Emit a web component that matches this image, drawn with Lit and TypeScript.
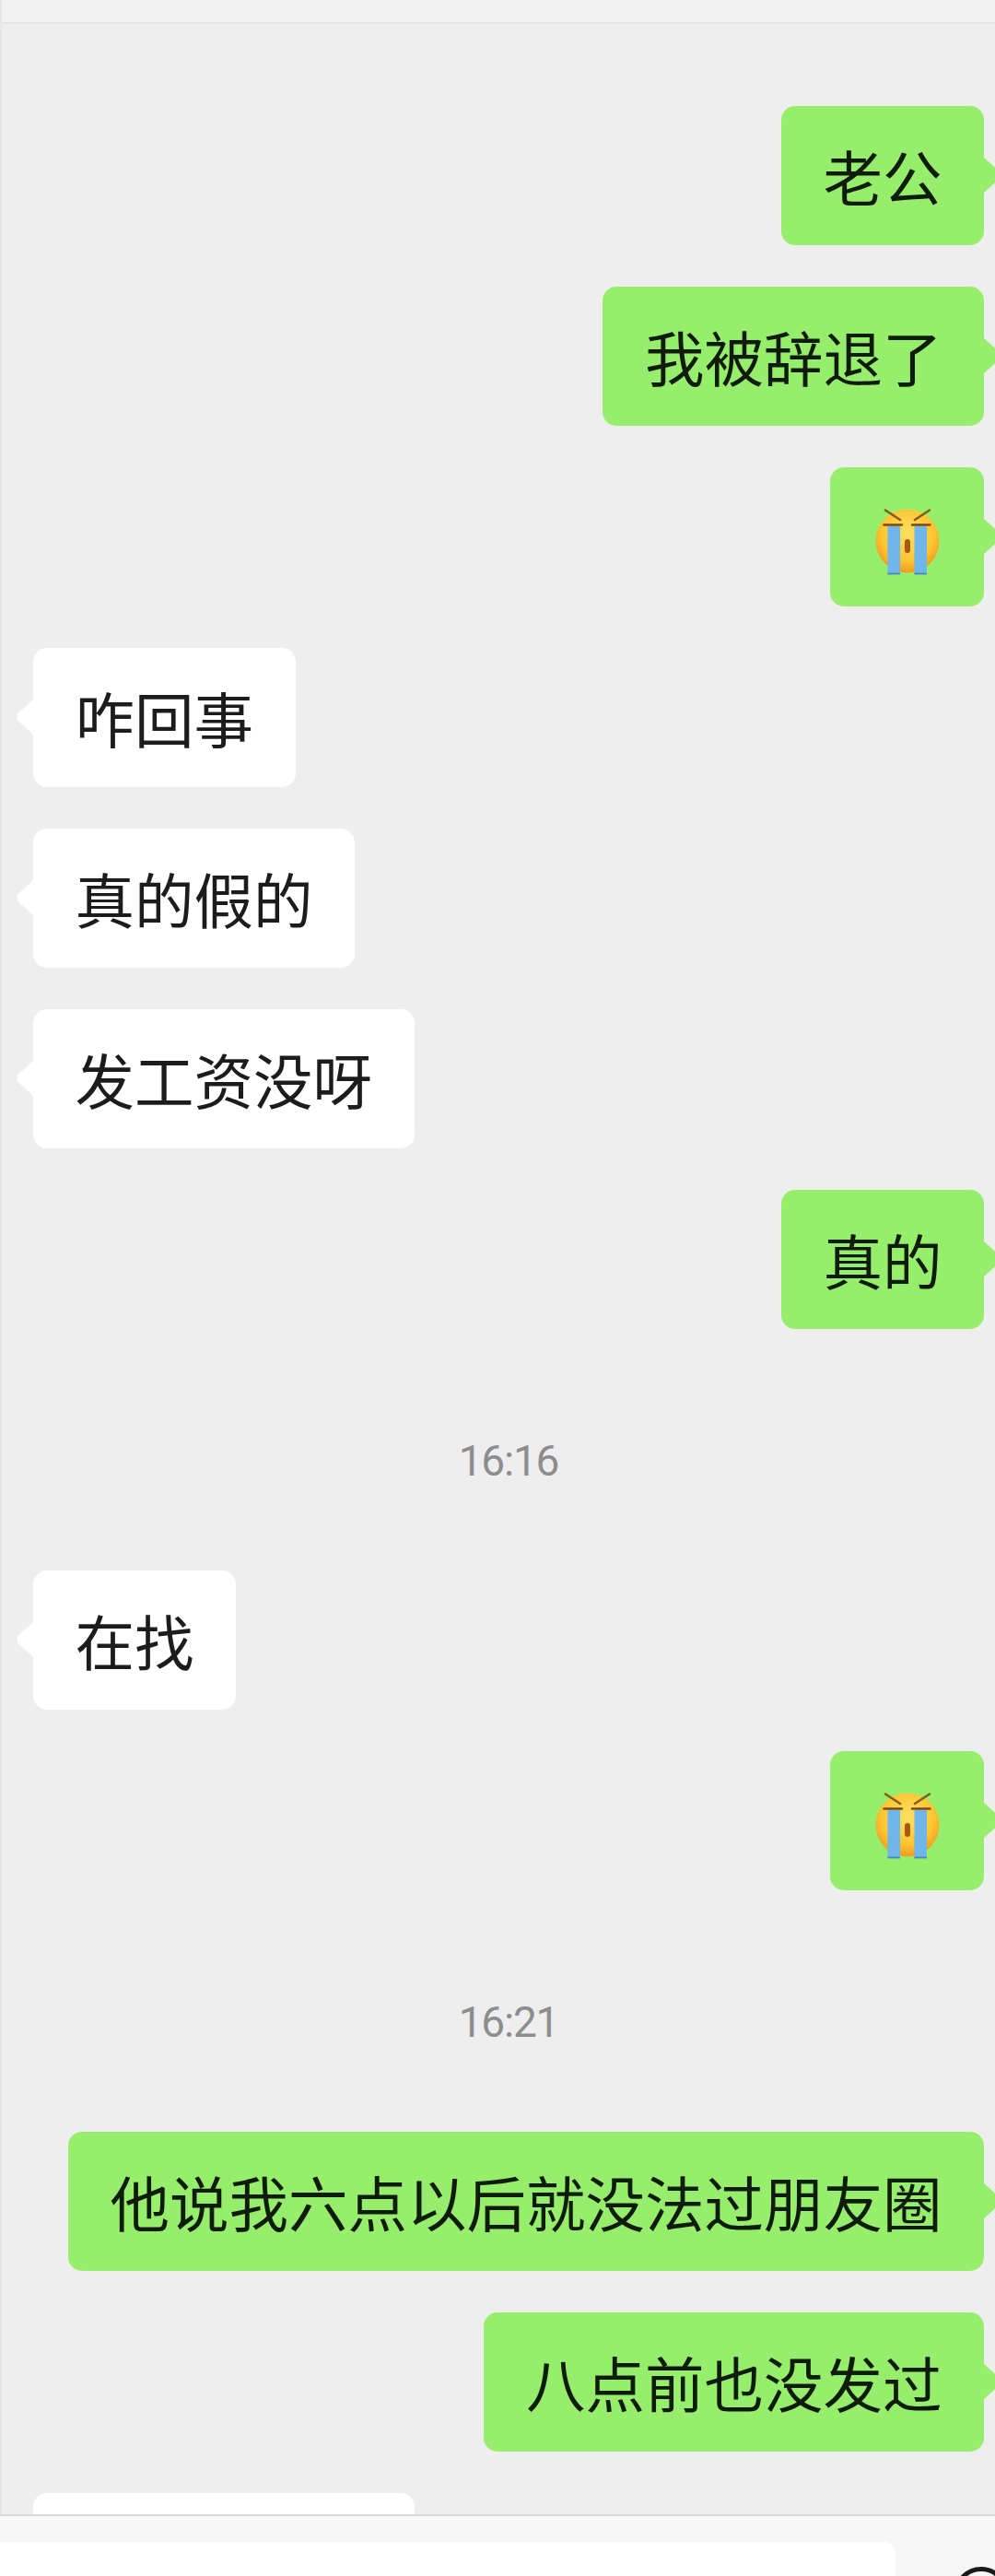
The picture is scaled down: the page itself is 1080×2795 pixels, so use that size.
import { LitElement, html, css, svg } from "lit";
import { customElement } from "lit/decorators.js";

type Item =
  | { kind: "me" | "them"; text: string }
  | { kind: "me"; emoji: true }
  | { kind: "time"; text: string };

const ITEMS: Item[] = [
  { kind: "me", text: "老公" },
  { kind: "me", text: "我被辞退了" },
  { kind: "me", emoji: true },
  { kind: "them", text: "咋回事" },
  { kind: "them", text: "真的假的" },
  { kind: "them", text: "发工资没呀" },
  { kind: "me", text: "真的" },
  { kind: "time", text: "16:16" },
  { kind: "them", text: "在找" },
  { kind: "me", emoji: true },
  { kind: "time", text: "16:21" },
  { kind: "me", text: "他说我六点以后就没法过朋友圈" },
  { kind: "me", text: "八点前也没发过" },
];

const tail = svg`<path d="M20 0 L3 15.5 Q0 20 3 24.5 L20 40 Z" fill="currentColor"/>`;

const cry = html`<svg class="emoji" viewBox="0 0 70 72" aria-hidden="true">
  <defs>
    <radialGradient id="f" cx="50%" cy="38%" r="60%">
      <stop offset="0" stop-color="#ffe064" />
      <stop offset="0.7" stop-color="#fcc531" />
      <stop offset="1" stop-color="#f0a020" />
    </radialGradient>
  </defs>
  <circle cx="35" cy="35" r="34.5" fill="url(#f)" />
  <path d="M11 1.5 L27 12 M59 1.5 L43 12" stroke="#8a5a1c" stroke-width="2.6" stroke-linecap="round" />
  <path d="M9.5 17.5 H29 M40 17.5 H59.5" stroke="#7a4a14" stroke-width="2.4" stroke-linecap="round" />
  <rect x="13.5" y="19" width="13.5" height="52" fill="#6fb6ea" />
  <rect x="42.5" y="19" width="13.5" height="52" fill="#6fb6ea" />
  <rect x="13.5" y="69.6" width="13.5" height="1.8" fill="#4a86b8" />
  <rect x="42.5" y="69.6" width="13.5" height="1.8" fill="#4a86b8" />
  <rect x="32" y="33" width="6" height="15" rx="3" fill="#a8590f" />
</svg>`;

@customElement("app-root")
export class AppRoot extends LitElement {
  static styles = css`
    :host {
      display: block;
      width: 1080px;
      height: 2795px;
      overflow: hidden;
      font-family: "Noto Sans CJK SC", "Liberation Sans", sans-serif;
      background: #eeeeee;
    }
    .page {
      height: 2795px;
      display: flex;
      flex-direction: column;
    }
    .top {
      flex: none;
      height: 24px;
      background: #f1f1f1;
      border-left: 2px solid #e6e6e6;
      border-bottom: 2px solid #e4e4e4;
    }
    .chat {
      flex: 1;
      min-height: 0;
      overflow: hidden;
      border-left: 2px solid #e6e6e6;
      padding: 89px 12px 0 34px;
      display: flex;
      flex-direction: column;
      gap: 45px;
    }
    .row {
      display: flex;
    }
    .row.me {
      justify-content: flex-end;
    }
    .bubble {
      position: relative;
      box-sizing: border-box;
      height: 151px;
      padding: 0 45.5px;
      border-radius: 15px;
      display: flex;
      align-items: center;
      font-size: 64.5px;
      line-height: 1;
      white-space: nowrap;
    }
    .me .bubble {
      background: #97ee6c;
      color: #0f1c0a;
    }
    .them .bubble {
      background: #ffffff;
      color: #1c1c1c;
    }
    .bubble.emoji-bubble {
      width: 167px;
      padding: 0;
      justify-content: center;
    }
    .bubble.cut {
      width: 414px;
    }
    .emoji {
      width: 70px;
      height: 72px;
      margin: 11px 0 0 1px;
    }
    .tail {
      position: absolute;
      top: 55px;
      width: 20px;
      height: 40px;
    }
    .me .tail {
      right: -19px;
      color: #97ee6c;
      transform: scaleX(-1);
    }
    .them .tail {
      left: -19px;
      color: #ffffff;
    }
    .time {
      align-self: center;
      margin: 68px 0 44px;
      font-size: 46px;
      line-height: 60px;
      color: #8d8d8d;
      font-family: Roboto, "Liberation Sans", sans-serif;
      letter-spacing: -1.2px;
    }
    .bottom {
      flex: none;
      height: 67px;
      box-sizing: border-box;
      background: #f7f7f7;
      border-top: 2px solid #d9d9d9;
      padding-top: 28px;
      display: flex;
      align-items: flex-start;
      position: relative;
    }
    .input {
      width: 972px;
      height: 60px;
      background: #ffffff;
      border-radius: 0 12px 0 0;
    }
    .voice {
      position: absolute;
      left: 1035px;
      top: 55px;
      width: 60px;
      height: 60px;
      box-sizing: border-box;
      border: 5px solid #1a1a1a;
      border-radius: 50%;
    }
  `;

  private bubble(item: Item) {
    if (item.kind === "time") {
      return html`<div class="time">${item.text}</div>`;
    }
    const isEmoji = "emoji" in item;
    return html`<div class="row ${item.kind}">
      <div class="bubble ${isEmoji ? "emoji-bubble" : ""}">
        <svg class="tail" viewBox="0 0 20 40" aria-hidden="true">${tail}</svg>
        ${isEmoji ? cry : (item as { text: string }).text}
      </div>
    </div>`;
  }

  render() {
    return html`<div class="page">
      <div class="top"></div>
      <div class="chat">
        ${ITEMS.map((i) => this.bubble(i))}
        <div class="row them"><div class="bubble cut"></div></div>
      </div>
      <div class="bottom">
        <div class="input"></div>
        <div class="voice"></div>
      </div>
    </div>`;
  }
}
